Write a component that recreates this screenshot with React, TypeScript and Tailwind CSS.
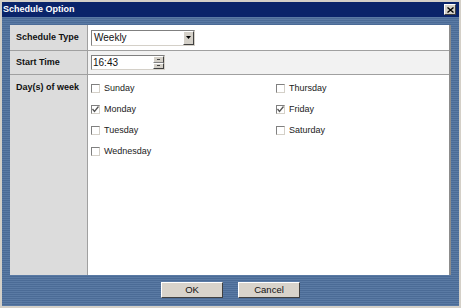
import React from "react"

const days = [
    ["Sunday", false],
    ["Monday", true],
    ["Tuesday", false],
    ["Wednesday", false],
] as const

const days2 = [
    ["Thursday", false],
    ["Friday", true],
    ["Saturday", false],
] as const

const Check = ({ label, checked }: { label: string; checked: boolean }) => (
    <div className="flex items-center h-[21px]">
        <div className="w-[9px] h-[9px] border border-t-[#808080] border-l-[#808080] border-r-[#d4d0c8] border-b-[#d4d0c8] bg-white flex items-center justify-center">
            {checked && (
                <svg width="7" height="7" viewBox="0 0 7 7">
                    <path d="M0.5 3 L2.5 5.5 L6.5 0.5" stroke="#555" strokeWidth="1.3" fill="none" />
                </svg>
            )}
        </div>
        <span className="ml-[4px] text-[9px] text-[#222]">{label}</span>
    </div>
)

export default function App() {
    return (
        <div
            className="w-[461px] h-[308px] bg-[#d4d0c8] pt-[2px] pl-[2px] pr-[2px] pb-[2px] flex flex-col"
            style={{ fontFamily: '"Liberation Sans", Arial, sans-serif' }}
        >
            <div className="h-[15px] bg-[#0a246a] flex items-center justify-between pl-[1px] pr-[3px]">
                <span className="text-white font-bold text-[9px]">Schedule Option</span>
                <div className="w-[12px] h-[11px] bg-[#d4d0c8] border border-t-white border-l-white border-r-[#404040] border-b-[#404040] flex items-center justify-center">
                    <svg width="7" height="6" viewBox="0 0 7 6">
                        <path d="M0.5 0.5 L6.5 5.5 M6.5 0.5 L0.5 5.5" stroke="#000" strokeWidth="1.4" />
                    </svg>
                </div>
            </div>
            <div className="flex-1 flex flex-col bg-[repeating-linear-gradient(to_bottom,#5a7aa4_0px,#5a7aa4_1px,#4b6b96_1px,#4b6b96_2px)] pt-[8px] pl-[8px] pr-[8px]">
                <div className="w-[441px] h-[250px] flex flex-col bg-white border-r-[2px] border-[#8c8c8c] text-[#111]">
                    <div className="flex h-[26px] border-b border-[#a0a0a0]">
                        <div className="w-[78px] bg-[#dcdcdc] border-r border-[#a0a0a0] flex items-center pl-[6px] font-bold text-[9px]">Schedule Type</div>
                        <div className="flex-1 bg-white flex items-center pl-[3px]">
                            <div className="w-[104px] h-[16px] border border-t-[#808080] border-l-[#808080] border-r-[#d4d0c8] border-b-[#d4d0c8] bg-white flex items-center justify-between">
                                <span className="text-[10px] pl-[2px]">Weekly</span>
                                <div className="w-[11px] h-[14px] bg-[#d4d0c8] border border-t-white border-l-white border-r-[#404040] border-b-[#404040] flex items-center justify-center">
                                    <svg width="5" height="3" viewBox="0 0 5 3">
                                        <path d="M0 0 L5 0 L2.5 3 Z" fill="#000" />
                                    </svg>
                                </div>
                            </div>
                        </div>
                    </div>
                    <div className="flex h-[24px] border-b border-[#a0a0a0]">
                        <div className="w-[78px] bg-[#dcdcdc] border-r border-[#a0a0a0] flex items-center pl-[6px] font-bold text-[9px]">Start Time</div>
                        <div className="flex-1 bg-[#f2f2f2] flex items-center pl-[3px]">
                            <div className="w-[74px] h-[15px] border border-t-[#808080] border-l-[#808080] border-r-[#d4d0c8] border-b-[#d4d0c8] bg-white flex items-center justify-between">
                                <span className="text-[10px] pl-[1px]">16:43</span>
                                <div className="w-[11px] h-[13px] flex flex-col">
                                    <div className="flex-1 bg-[#d4d0c8] border border-t-white border-l-white border-r-[#404040] border-b-[#808080] flex items-center justify-center">
                                        <div className="w-[3px] h-[1px] bg-[#444]" />
                                    </div>
                                    <div className="flex-1 bg-[#d4d0c8] border border-t-white border-l-white border-r-[#404040] border-b-[#404040] flex items-center justify-center">
                                        <div className="w-[3px] h-[1px] bg-[#444]" />
                                    </div>
                                </div>
                            </div>
                        </div>
                    </div>
                    <div className="flex flex-1">
                        <div className="w-[78px] bg-[#dcdcdc] border-r border-[#a0a0a0] pl-[6px] pt-[6px] font-bold text-[9px]">Day(s) of week</div>
                        <div className="flex-1 flex pl-[3px] pt-[3px]">
                            <div className="w-[185px] flex flex-col">
                                {days.map(([d, c]) => (
                                    <Check key={d} label={d} checked={c} />
                                ))}
                            </div>
                            <div className="flex flex-col">
                                {days2.map(([d, c]) => (
                                    <Check key={d} label={d} checked={c} />
                                ))}
                            </div>
                        </div>
                    </div>
                </div>
                <div className="flex justify-center gap-[15px] pt-[7px]">
                    <button className="w-[62px] h-[16px] bg-[#d8d3cb] border border-t-white border-l-white border-r-[#404040] border-b-[#404040] text-[9.5px] text-[#111]">OK</button>
                    <button className="w-[62px] h-[16px] bg-[#d8d3cb] border border-t-white border-l-white border-r-[#404040] border-b-[#404040] text-[9.5px] text-[#111]">Cancel</button>
                </div>
            </div>
        </div>
    )
}
